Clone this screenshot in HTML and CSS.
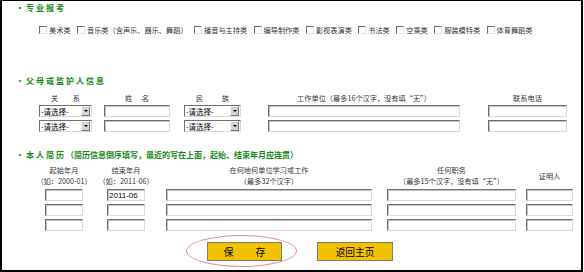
FILE: index.html
```html
<!DOCTYPE html>
<html lang="zh-CN">
<head>
    <meta charset="UTF-8">
    <title>报名信息</title>
    <link rel="stylesheet" href="styles.css">
</head>
<body>
<div class="frame">
    <!--专业报考-->
    <div class="title t1"><span class="dot">·</span>专业报考</div>
    <div class="checks">
        <label><input type="checkbox">美术类</label>
        <label><input type="checkbox">音乐类（含声乐、器乐、舞蹈）</label>
        <label><input type="checkbox">播音与主持类</label>
        <label><input type="checkbox">编导制作类</label>
        <label><input type="checkbox">影视表演类</label>
        <label><input type="checkbox">书法类</label>
        <label><input type="checkbox">空乘类</label>
        <label><input type="checkbox">服装模特类</label>
        <label><input type="checkbox">体育舞蹈类</label>
    </div>

    <!--父母或监护人-->
    <div class="title t2"><span class="dot">·</span>父母或监护人信息</div>
    <div class="parents">
        <div class="col p-rel">
            <div class="lbl ws-rel">关 系</div>
            <div class="sel"><select><option>-请选择-</option></select><span class="arr"></span></div>
            <div class="sel"><select><option>-请选择-</option></select><span class="arr"></span></div>
        </div>
        <div class="col p-name">
            <div class="lbl ws-name">姓 名</div>
            <input type="text">
            <input type="text">
        </div>
        <div class="col p-nation">
            <div class="lbl ws-nation">民 族</div>
            <div class="sel"><select><option>-请选择-</option></select><span class="arr"></span></div>
            <div class="sel"><select><option>-请选择-</option></select><span class="arr"></span></div>
        </div>
        <div class="col p-work">
            <div class="lbl">工作单位（最多16个汉字，没有填“无”）</div>
            <input type="text">
            <input type="text">
        </div>
        <div class="col p-tel">
            <div class="lbl">联系电话</div>
            <input type="text">
            <input type="text">
        </div>
    </div>

    <!--本人简历-->
    <div class="title t3"><span class="dot">·</span>本人简历<span class="note">（简历信息倒序填写，最近的写在上面，起始、结束年月应连贯）</span></div>
    <div class="history">
        <div class="col h-start">
            <div class="head"><span>起始年月</span><span>（如：2000-01）</span></div>
            <input type="text">
            <input type="text">
            <input type="text">
        </div>
        <div class="col h-end">
            <div class="head"><span>结束年月</span><span>（如：2011-06）</span></div>
            <input type="text" value="2011-06">
            <input type="text">
            <input type="text">
        </div>
        <div class="col h-place">
            <div class="head"><span>在何地何单位学习或工作</span><span>（最多32个汉字）</span></div>
            <input type="text">
            <input type="text">
            <input type="text">
        </div>
        <div class="col h-job">
            <div class="head"><span>任何职务</span><span>（最多15个汉字，没有填“无”）</span></div>
            <input type="text">
            <input type="text">
            <input type="text">
        </div>
        <div class="col h-ref">
            <div class="head"><span>证明人</span></div>
            <input type="text">
            <input type="text">
            <input type="text">
        </div>
    </div>

    <div class="btns">
        <button class="btn save"><span>保</span><span>存</span><span class="ring"></span></button>
        <button class="btn back">返回主页</button>
    </div>
</div>
</body>
</html>
```

FILE: styles.css
```css
*{
    margin: 0;
    padding: 0;
}

body{
    font-family: "Noto Sans CJK SC", sans-serif;
    font-size: 7.2px;
    color: #333333;
    background: #ffffff;
}

.frame{
    width: 583px;
    height: 272px;
    border: 2px solid #000000;
    border-top-width: 1px;
    box-sizing: border-box;
}

/* 标题 */
.title{
    height: 10px;
    line-height: 10px;
    margin-left: 14px;
    font-size: 8px;
    font-weight: bold;
    color: #138a13;
    letter-spacing: 2px;
    white-space: nowrap;
}
.title .dot{
    display: inline-block;
    width: 10px;
    letter-spacing: 0;
}
.title .note{
    letter-spacing: 0;
}
.t1{ margin-top: 2px; }
.t2{ margin-top: 41px; }
.t3{ margin-top: 18px; }

/* 专业 */
.checks{
    display: flex;
    align-items: center;
    gap: 6.4px;
    height: 10px;
    margin: 12px 0 0 37px;
}
.checks label{
    display: flex;
    align-items: center;
    gap: 2px;
    line-height: 10px;
    white-space: nowrap;
}
.checks input{
    appearance: none;
    width: 8px;
    height: 8px;
    border: 1px solid;
    border-color: #6e6e6e #e2e2e2 #e2e2e2 #6e6e6e;
    background: #ffffff;
}

/* 输入框 */
input[type=text]{
    display: block;
    height: 12px;
    box-sizing: border-box;
    border: 1px solid;
    border-color: #6e6e6e #dadada #dadada #6e6e6e;
    box-shadow: inset 1px 1px 0 #c4c4c4;
    font: 8px "Liberation Sans", sans-serif;
    color: #000000;
    padding-left: 1px;
    outline: none;
}

.sel{
    display: flex;
    height: 12px;
    box-sizing: border-box;
    border: 1px solid;
    border-color: #6e6e6e #dadada #dadada #6e6e6e;
    background: #ffffff;
}
.sel select{
    appearance: none;
    flex: 1;
    min-width: 0;
    height: 10px;
    line-height: 10px;
    border: 0;
    background: transparent;
    font: 7.5px "Noto Sans CJK SC", sans-serif;
    color: #000000;
    padding-left: 1px;
    outline: none;
}
.sel .arr{
    width: 9px;
    margin-right: 1px;
    box-sizing: border-box;
    background: #d6d3cc;
    border: 1px solid;
    border-color: #f6f6f6 #7a7a7a #7a7a7a #f6f6f6;
    display: flex;
    align-items: center;
    justify-content: center;
}
.sel .arr::after{
    content: "";
    border-left: 2px solid transparent;
    border-right: 2px solid transparent;
    border-top: 2px solid #000000;
}

/* 父母 */
.parents{
    display: flex;
    margin: 7px 0 0 37px;
}
.col{
    display: flex;
    flex-direction: column;
    align-items: center;
}
.col > input, .col > .sel{
    width: 100%;
}
.parents .col > * + *{
    margin-top: 3px;
}
.parents .lbl + *{
    margin-top: 2px;
}
.lbl{
    height: 10px;
    line-height: 10px;
    white-space: nowrap;
}
.ws-rel{ word-spacing: 13px; }
.ws-name{ word-spacing: 8px; }
.ws-nation{ word-spacing: 17px; }

.p-rel{ width: 53px; }
.p-name{ width: 66px; margin-left: 12px; }
.p-nation{ width: 57px; margin-left: 14px; }
.p-work{ width: 192px; margin-left: 27px; }
.p-tel{ width: 79px; margin-left: 28px; }

/* 简历 */
.history{
    display: flex;
    margin: 5px 0 0 43px;
}
.head{
    height: 22px;
    display: flex;
    flex-direction: column;
    justify-content: center;
    align-items: center;
    line-height: 11px;
    white-space: nowrap;
}
.history .col > input{
    margin-top: 3px;
}
.history .head + input{
    margin-top: 2px;
}
.h-start{ width: 38px; }
.h-end{ width: 38px; margin-left: 24px; }
.h-place{ width: 206px; margin-left: 21px; }
.h-job{ width: 129px; margin-left: 15px; }
.h-ref{ width: 47px; margin-left: 10px; }

/* 按钮 */
.btns{
    display: flex;
    gap: 35px;
    margin: 11px 0 0 205px;
}
.btn{
    position: relative;
    width: 75px;
    height: 19px;
    background: #f2c200;
    border: 1px solid #7e7b66;
    font: 9.7px "Noto Sans CJK SC", sans-serif;
    color: #000000;
    display: flex;
    align-items: center;
    justify-content: center;
    gap: 22px;
}
.back{
    width: 76px;
}
.ring{
    position: absolute;
    left: -22px;
    top: -8px;
    width: 111px;
    height: 32px;
    box-sizing: border-box;
    border: 1px solid #e88aa6;
    border-radius: 50%;
    pointer-events: none;
}
```
